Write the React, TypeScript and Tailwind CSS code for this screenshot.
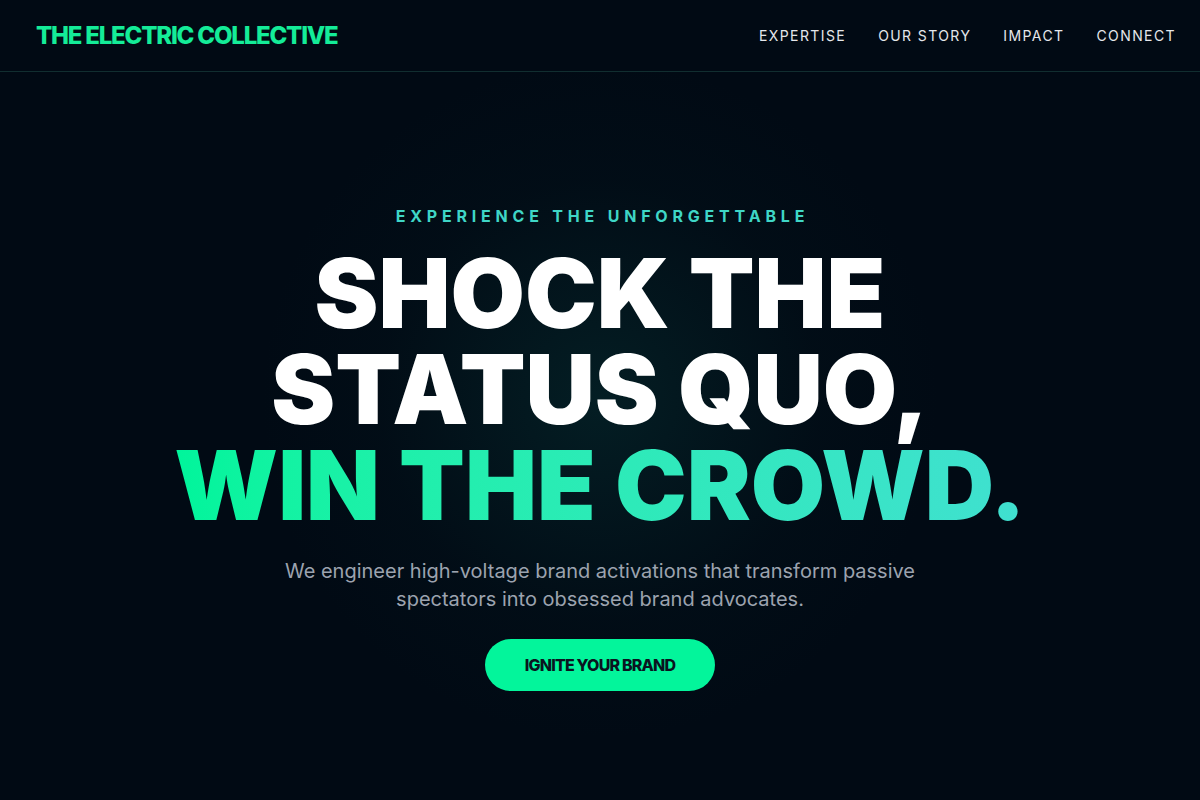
const navLinks = ['EXPERTISE', 'OUR STORY', 'IMPACT', 'CONNECT'];

export default function App() {
  return (
    <div className="min-h-screen bg-[#010a14] text-white font-['Inter','Liberation_Sans',sans-serif] flex flex-col">
      <header className="h-[72px] shrink-0 flex items-center justify-between pl-9 pr-6 border-b border-[#112e30]">
        <div className="text-[24px] font-extrabold tracking-[-0.05em] text-[#14ec98]">
          THE ELECTRIC COLLECTIVE
        </div>
        <nav className="flex items-center gap-8">
          {navLinks.map((link) => (
            <a key={link} href="#" className="text-[14px] tracking-[0.1em] text-[#e5e7eb]">
              {link}
            </a>
          ))}
        </nav>
      </header>

      <main className="flex-1 flex flex-col items-center text-center pt-[132px] pb-[110px] bg-[radial-gradient(circle_at_50%_45%,rgba(20,150,130,0.14)_0px,rgba(10,60,60,0.06)_220px,transparent_340px)]">
        <p className="pl-[0.3em] text-[16px] leading-6 font-bold tracking-[0.3em] text-[#3fd6c6]">
          EXPERIENCE THE UNFORGETTABLE
        </p>
        <h1 className="mt-[17px] text-[96px] leading-none font-black tracking-normal">
          <span className="block">SHOCK THE</span>
          <span className="block">STATUS QUO,</span>
          <span className="block bg-gradient-to-r from-[#00f59b] to-[#40e0d0] bg-clip-text text-transparent">
            WIN THE CROWD.
          </span>
        </h1>
        <p className="mt-6 max-w-[660px] text-[20px] leading-7 text-[#9ca3af]">
          We engineer high-voltage brand activations that transform passive spectators into obsessed brand advocates.
        </p>
        <button className="mt-[26px] rounded-full bg-[#03f59b] px-10 py-4 text-[16px] leading-5 font-extrabold tracking-[-0.05em] text-[#0a1420]">
          IGNITE YOUR BRAND
        </button>
      </main>
    </div>
  );
}
